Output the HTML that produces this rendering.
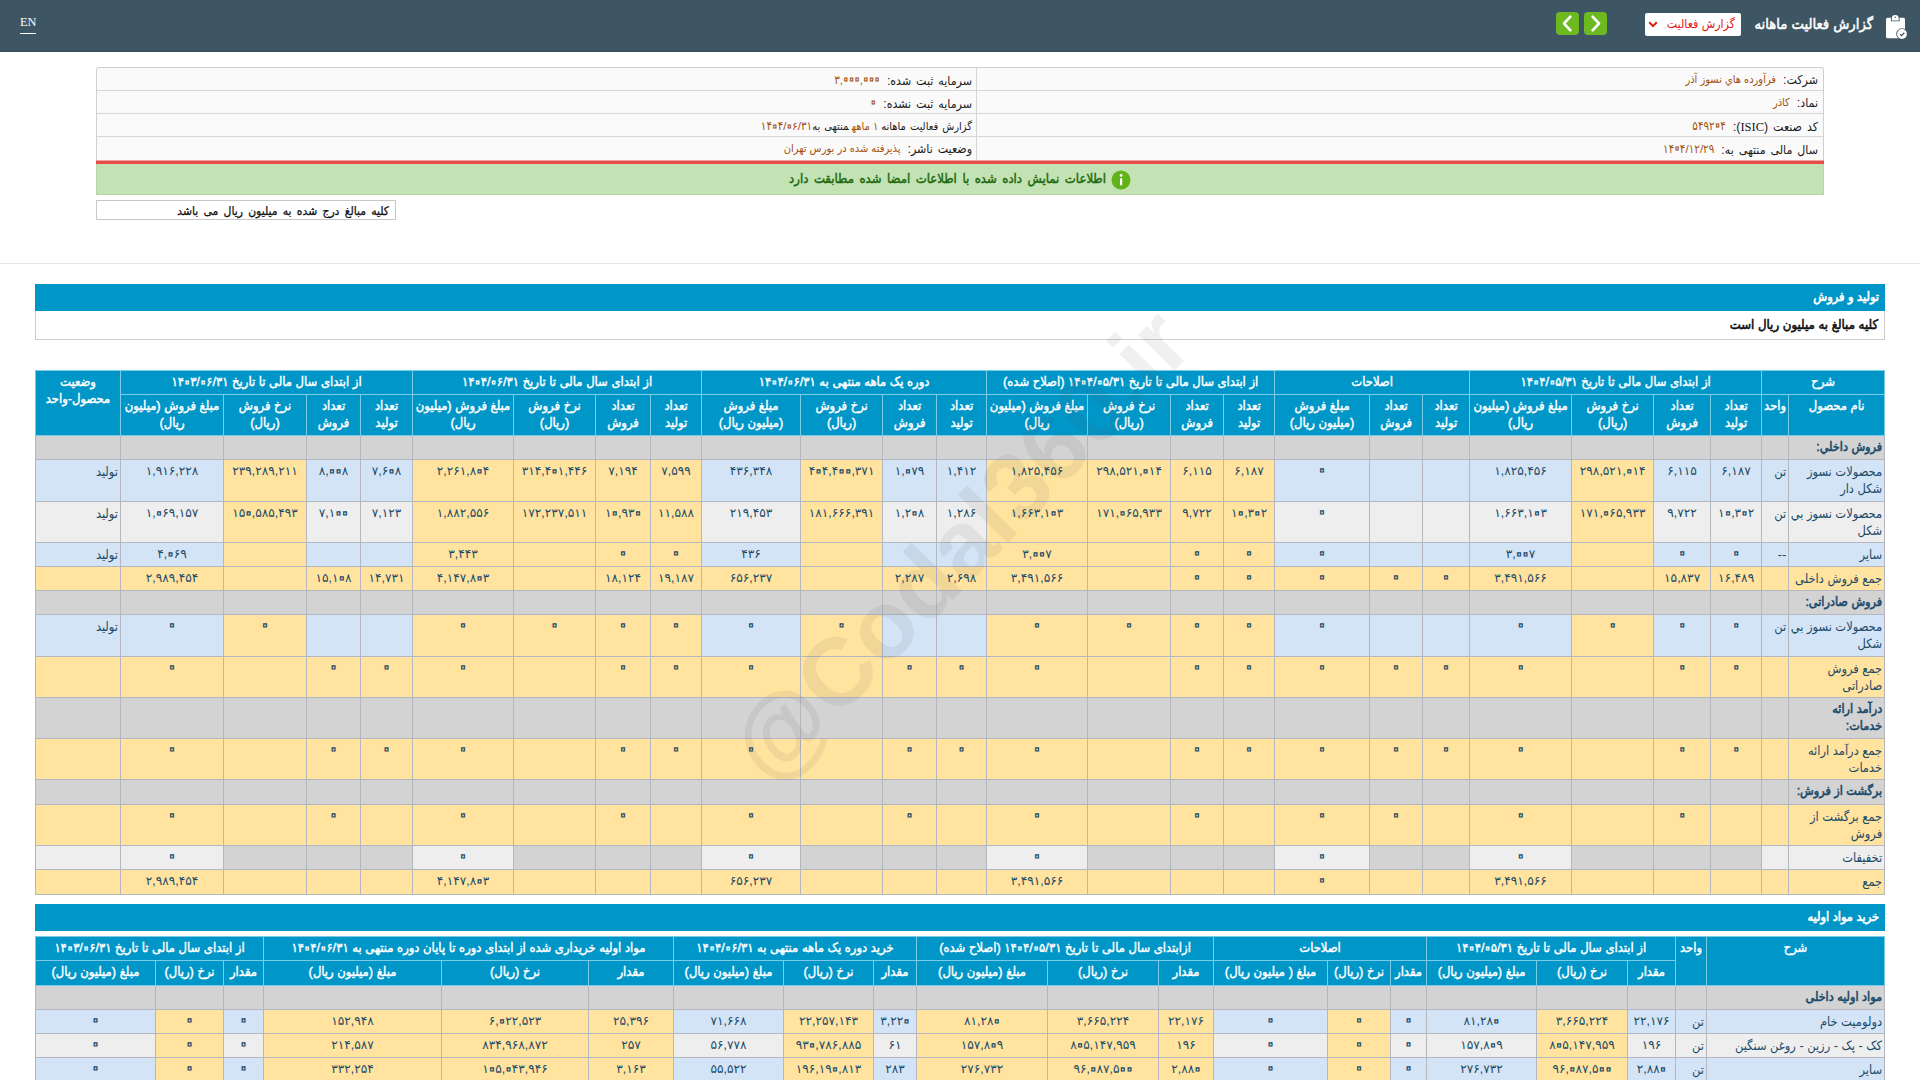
<!DOCTYPE html>
<html lang="fa" dir="rtl">
<head>
<meta charset="utf-8">
<title>گزارش فعالیت ماهانه</title>
<style>
*{box-sizing:border-box;margin:0;padding:0}
html,body{width:1920px;height:1080px;overflow:hidden;background:#fff}
body{font-family:"Liberation Sans","DejaVu Sans Condensed","DejaVu Sans",sans-serif;direction:rtl;position:relative;color:#000}
.abs{position:absolute}
#hdr{left:0;top:0;width:1920px;height:52px;background:#3e5663;border-bottom:1px solid #36505c}
#ttl{right:47px;top:13px;color:#fff;-webkit-text-stroke:0.5px #fff;font-size:14.7px;line-height:22px;white-space:nowrap}
#sel{left:1645px;top:13px;width:96px;height:23px;background:#fff;border-radius:2px;color:#e0201c;font-size:12.3px;line-height:22px;text-align:right;padding-right:6px;white-space:nowrap}
.gb{top:12px;width:23px;height:23px;background:#6cb920;border-radius:4px}
#en{left:20px;top:15px;color:#fff;font-family:"Liberation Serif",serif;font-size:12.3px;line-height:14px;direction:ltr;border-bottom:1px solid #fff;padding-bottom:4px}
#info{left:96px;top:67px;width:1728px;height:95px;border:1px solid #d0d0d0;border-bottom:none;background:#fafafa;border-radius:3px 3px 0 0}
.ir{position:absolute;left:0;right:0;height:23px;border-bottom:1px solid #d6d6d6}
.ir:nth-child(4){border-bottom:none}
.ic{position:absolute;top:0;height:23px;font-size:12.3px;line-height:25px;white-space:nowrap;color:#1a1a1a;word-spacing:1.5px}
.ic b{font-weight:normal;color:#a2500f;margin-right:7px;font-size:11px;word-spacing:0;position:relative;top:-1.5px}
.ic b.dg{font-size:11.6px}
.ic.sm{font-size:11px;word-spacing:1px;line-height:23px}
.ic.sm b{top:0}
.ic i{font-style:normal;font-family:"Liberation Serif",serif;font-size:12.5px}
#red{left:96px;top:161px;width:1728px;height:3px;background:#e84c4c;box-shadow:0 -1px 0 rgba(232,76,76,.5)}
#grn{left:96px;top:164px;width:1728px;height:31px;background:#c3e3b4;border:1px solid #b9d3ad;border-top:none;color:#1f6a10;-webkit-text-stroke:0.45px #1f6a10;font-size:13px;word-spacing:1.9px;line-height:30px;text-align:center;white-space:nowrap}
#note{left:96px;top:200px;width:300px;height:20px;border:1px solid #c8c8c8;background:#fff;font-size:12px;-webkit-text-stroke:0.25px #111;word-spacing:1.9px;line-height:20px;padding-right:6px;white-space:nowrap;color:#111}
#hr{left:0;top:263px;width:1920px;height:1px;background:#e6e6e6}
.bar{left:35px;width:1850px;height:27px;background:#0096c8;color:#fff;-webkit-text-stroke:0.6px #fff;font-size:12.7px;line-height:26px;padding-right:6px;white-space:nowrap}
#sub{left:35px;top:311px;width:1850px;height:29px;border:1px solid #cfcfcf;border-top:none;background:#fff;-webkit-text-stroke:0.55px #111;font-size:13.1px;line-height:28px;padding-right:6px;white-space:nowrap;color:#111}
table{position:absolute;left:35px;width:1850px;border-collapse:collapse;table-layout:fixed;direction:rtl}
td,th{border:1px solid #b4b6c0;font-size:12.75px;line-height:17px;text-align:center;vertical-align:top;padding:3px 1px 0 1px;color:#1b4a68;overflow:hidden;white-space:nowrap;font-weight:normal}
th{background:#0096c8;color:#fff;border-color:#7ccbe6;font-size:12.9px;-webkit-text-stroke:0.4px #fff;padding-top:2px}
td.n{text-align:right;padding-right:2px}
td.r{text-align:right;padding-right:2px}
.y{background:#ffe39e}.b{background:#d3e4f6}.g{background:#eeeeee}.d{background:#d3d3d3}
tr.h td{-webkit-text-stroke:0.55px #1b4a68;font-size:12.5px}
td.u{font-family:"Liberation Sans","DejaVu Sans",sans-serif;font-size:12.2px}
.zh{font-size:24px;line-height:14px;color:transparent;-webkit-text-stroke:1.2px #fff;vertical-align:-2.55px;margin:0 -2.68px}
.zb{font-size:24px;line-height:14px;color:transparent;-webkit-text-stroke:1px #a2500f;vertical-align:-2.95px;margin:0 -3px}
.zz{font-size:26px;line-height:14px;color:transparent;-webkit-text-stroke:1.2px #1b4a68;vertical-align:-3.6px;margin:0 -3.71px}
td.z{font-family:"Liberation Sans","DejaVu Sans",sans-serif;font-size:26px;color:transparent;-webkit-text-stroke:1.2px #1b4a68;padding-top:1px}
#wm{left:560px;top:480px;width:800px;height:130px;line-height:130px;text-align:center;font-size:96px;font-weight:bold;color:rgba(80,80,80,0.085);transform:rotate(-46deg);direction:ltr;white-space:nowrap;pointer-events:none;font-family:"Liberation Sans",sans-serif}
</style>
</head>
<body>
<div id="hdr" class="abs">
<svg class="abs" style="left:1880px;top:10px" width="32" height="32" viewBox="0 0 32 32"><rect x="6" y="7.7" width="19" height="20.6" rx="1.6" fill="#fff"/><path d="M10.9 11.3V8.6a4.35 4.35 0 0 1 8.7 0v2.7z" fill="#3e5663"/><path d="M11.8 10.4V8.5a3.45 3.45 0 0 1 6.9 0v1.9z" fill="#fff"/><circle cx="15.25" cy="7.3" r="0.7" fill="#3e5663"/><circle cx="22" cy="24" r="5.8" fill="#3e5663"/><circle cx="22" cy="24" r="4.9" fill="#fff"/><path d="M20.1 24.2l1.4 1.4 2.8-2.9" stroke="#3e5663" stroke-width="1.3" fill="none"/></svg>
<div id="ttl" class="abs">گزارش فعالیت ماهانه</div>
<div id="sel" class="abs">گزارش فعالیت<svg class="abs" style="left:3px;top:8px" width="10" height="7" viewBox="0 0 10 7"><path d="M1.2 1.2L5 5l3.8-3.800000000000001" stroke="#e0201c" stroke-width="2" fill="none"/></svg></div>
<div class="gb abs" style="left:1584px"><svg width="23" height="23" viewBox="0 0 23 23"><path d="M8.6 4.6l6.4 6.9-6.4 6.9" stroke="#fff" stroke-width="2.6" fill="none" stroke-linecap="round" stroke-linejoin="round"/></svg></div>
<div class="gb abs" style="left:1556px"><svg width="23" height="23" viewBox="0 0 23 23"><path d="M14.4 4.6l-6.4 6.9 6.4 6.9" stroke="#fff" stroke-width="2.6" fill="none" stroke-linecap="round" stroke-linejoin="round"/></svg></div>
<div id="en" class="abs">EN</div>
</div>
<div id="info" class="abs">
<div class="ir" style="top:0px"><div class="ic" style="right:5px">شرکت:<b>فرآورده هاي نسوز آذر</b></div><div class="ic" style="right:851px">سرمایه ثبت شده:<b class="dg">۳,<span class="zb">۰</span><span class="zb">۰</span><span class="zb">۰</span>,<span class="zb">۰</span><span class="zb">۰</span><span class="zb">۰</span></b></div></div>
<div class="ir" style="top:23px"><div class="ic" style="right:5px">نماد:<b>کاذر</b></div><div class="ic" style="right:851px">سرمایه ثبت نشده:<b class="dg"><span class="zb">۰</span></b></div></div>
<div class="ir" style="top:46px"><div class="ic" style="right:5px">کد صنعت (<i>ISIC</i>):<b class="dg">۵۴۹۲<span class="zb">۰</span>۴</b></div><div class="ic sm" style="right:851px">گزارش فعالیت ماهانه<b style="margin:0 3px">۱ ماهه</b>منتهی به<b class="dg" style="margin:0">۱۴<span class="zb">۰</span>۴/<span class="zb">۰</span>۶/۳۱</b></div></div>
<div class="ir" style="top:69px"><div class="ic" style="right:5px">سال مالی منتهی به:<b class="dg">۱۴<span class="zb">۰</span>۴/۱۲/۲۹</b></div><div class="ic" style="right:851px">وضعیت ناشر:<b>پذیرفته شده در بورس تهران</b></div></div>
<div class="abs" style="left:879px;top:0;width:1px;height:93px;background:#d6d6d6"></div>
</div>
<div id="red" class="abs"></div>
<div id="grn" class="abs"><svg style="vertical-align:middle;margin-left:5px" width="20" height="20" viewBox="0 0 20 20"><circle cx="10" cy="10" r="9.5" fill="#62b31a"/><rect x="9" y="8.3" width="2.2" height="7" fill="#fff"/><circle cx="10.1" cy="5.4" r="1.4" fill="#fff"/></svg>اطلاعات نمایش داده شده با اطلاعات امضا شده مطابقت دارد</div>
<div id="note" class="abs">کلیه مبالغ درج شده به میلیون ریال می باشد</div>
<div id="hr" class="abs"></div>
<div class="bar abs" style="top:284px">تولید و فروش</div>
<div id="sub" class="abs">کلیه مبالغ به میلیون ریال است</div>
<table style="top:370px;width:1849px">
<colgroup><col style="width:96px"><col style="width:27px"><col style="width:51px"><col style="width:57px"><col style="width:82px"><col style="width:102px"><col style="width:47px"><col style="width:53px"><col style="width:95px"><col style="width:51px"><col style="width:53px"><col style="width:83px"><col style="width:101px"><col style="width:50px"><col style="width:54px"><col style="width:82px"><col style="width:99px"><col style="width:51px"><col style="width:55px"><col style="width:82px"><col style="width:101px"><col style="width:52px"><col style="width:54px"><col style="width:83px"><col style="width:103px"><col style="width:85px"></colgroup>
<tr style="height:24px"><th colspan="2">شرح</th><th colspan="4">از ابتدای سال مالی تا تاریخ ۱۴<span class="zh">۰</span>۴/<span class="zh">۰</span>۵/۳۱</th><th colspan="3">اصلاحات</th><th colspan="4">از ابتدای سال مالی تا تاریخ ۱۴<span class="zh">۰</span>۴/<span class="zh">۰</span>۵/۳۱ (اصلاح شده)</th><th colspan="4">دوره یک ماهه منتهی به ۱۴<span class="zh">۰</span>۴/<span class="zh">۰</span>۶/۳۱</th><th colspan="4">از ابتدای سال مالی تا تاریخ ۱۴<span class="zh">۰</span>۴/<span class="zh">۰</span>۶/۳۱</th><th colspan="4">از ابتدای سال مالی تا تاریخ ۱۴<span class="zh">۰</span>۳/<span class="zh">۰</span>۶/۳۱</th><th rowspan="2">وضعیت<br>محصول-واحد</th></tr>
<tr style="height:41px"><th>نام محصول</th><th>واحد</th><th>تعداد<br>تولید</th><th>تعداد<br>فروش</th><th>نرخ فروش<br>(ریال)</th><th>مبلغ فروش (میلیون<br>ریال)</th><th>تعداد<br>تولید</th><th>تعداد<br>فروش</th><th>مبلغ فروش<br>(میلیون ریال)</th><th>تعداد<br>تولید</th><th>تعداد<br>فروش</th><th>نرخ فروش<br>(ریال)</th><th>مبلغ فروش (میلیون<br>ریال)</th><th>تعداد<br>تولید</th><th>تعداد<br>فروش</th><th>نرخ فروش<br>(ریال)</th><th>مبلغ فروش<br>(میلیون ریال)</th><th>تعداد<br>تولید</th><th>تعداد<br>فروش</th><th>نرخ فروش<br>(ریال)</th><th>مبلغ فروش (میلیون<br>ریال)</th><th>تعداد<br>تولید</th><th>تعداد<br>فروش</th><th>نرخ فروش<br>(ریال)</th><th>مبلغ فروش (میلیون<br>ریال)</th></tr>
<tr style="height:24px" class="h"><td class="d n">فروش داخلي:</td><td class="d r"></td><td class="d"></td><td class="d"></td><td class="d"></td><td class="d"></td><td class="d"></td><td class="d"></td><td class="d"></td><td class="d"></td><td class="d"></td><td class="d"></td><td class="d"></td><td class="d"></td><td class="d"></td><td class="d"></td><td class="d"></td><td class="d"></td><td class="d"></td><td class="d"></td><td class="d"></td><td class="d"></td><td class="d"></td><td class="d"></td><td class="d"></td><td class="d r"></td></tr>
<tr style="height:42px"><td class="b n">محصولات نسوز<br>شکل دار</td><td class="b r">تن</td><td class="b u">۶,۱۸۷</td><td class="b u">۶,۱۱۵</td><td class="y u">۲۹۸,۵۲۱,<span class="zz">۰</span>۱۴</td><td class="b u">۱,۸۲۵,۴۵۶</td><td class="b"></td><td class="b"></td><td class="b z">۰</td><td class="y u">۶,۱۸۷</td><td class="y u">۶,۱۱۵</td><td class="y u">۲۹۸,۵۲۱,<span class="zz">۰</span>۱۴</td><td class="y u">۱,۸۲۵,۴۵۶</td><td class="b u">۱,۴۱۲</td><td class="b u">۱,<span class="zz">۰</span>۷۹</td><td class="y u">۴<span class="zz">۰</span>۴,۴<span class="zz">۰</span><span class="zz">۰</span>,۳۷۱</td><td class="b u">۴۳۶,۳۴۸</td><td class="y u">۷,۵۹۹</td><td class="y u">۷,۱۹۴</td><td class="y u">۳۱۴,۴<span class="zz">۰</span>۱,۴۴۶</td><td class="y u">۲,۲۶۱,۸<span class="zz">۰</span>۴</td><td class="b u">۷,۶<span class="zz">۰</span>۸</td><td class="b u">۸,<span class="zz">۰</span><span class="zz">۰</span>۸</td><td class="y u">۲۳۹,۲۸۹,۲۱۱</td><td class="b u">۱,۹۱۶,۲۲۸</td><td class="b r">تولید</td></tr>
<tr style="height:41px"><td class="g n">محصولات نسوز بي<br>شکل</td><td class="g r">تن</td><td class="g u">۱<span class="zz">۰</span>,۳<span class="zz">۰</span>۲</td><td class="g u">۹,۷۲۲</td><td class="y u">۱۷۱,<span class="zz">۰</span>۶۵,۹۳۳</td><td class="g u">۱,۶۶۳,۱<span class="zz">۰</span>۳</td><td class="g"></td><td class="g"></td><td class="g z">۰</td><td class="y u">۱<span class="zz">۰</span>,۳<span class="zz">۰</span>۲</td><td class="y u">۹,۷۲۲</td><td class="y u">۱۷۱,<span class="zz">۰</span>۶۵,۹۳۳</td><td class="y u">۱,۶۶۳,۱<span class="zz">۰</span>۳</td><td class="g u">۱,۲۸۶</td><td class="g u">۱,۲<span class="zz">۰</span>۸</td><td class="y u">۱۸۱,۶۶۶,۳۹۱</td><td class="g u">۲۱۹,۴۵۳</td><td class="y u">۱۱,۵۸۸</td><td class="y u">۱<span class="zz">۰</span>,۹۳<span class="zz">۰</span></td><td class="y u">۱۷۲,۲۳۷,۵۱۱</td><td class="y u">۱,۸۸۲,۵۵۶</td><td class="g u">۷,۱۲۳</td><td class="g u">۷,۱<span class="zz">۰</span><span class="zz">۰</span></td><td class="y u">۱۵<span class="zz">۰</span>,۵۸۵,۴۹۳</td><td class="g u">۱,<span class="zz">۰</span>۶۹,۱۵۷</td><td class="g r">تولید</td></tr>
<tr style="height:24px"><td class="b n">سایر</td><td class="b r">--</td><td class="b z">۰</td><td class="b z">۰</td><td class="y"></td><td class="b u">۳,<span class="zz">۰</span><span class="zz">۰</span>۷</td><td class="b"></td><td class="b"></td><td class="b z">۰</td><td class="y z">۰</td><td class="y z">۰</td><td class="y"></td><td class="y u">۳,<span class="zz">۰</span><span class="zz">۰</span>۷</td><td class="b"></td><td class="b"></td><td class="y"></td><td class="b u">۴۳۶</td><td class="y z">۰</td><td class="y z">۰</td><td class="y"></td><td class="y u">۳,۴۴۳</td><td class="b"></td><td class="b"></td><td class="y"></td><td class="b u">۴,<span class="zz">۰</span>۶۹</td><td class="b r">تولید</td></tr>
<tr style="height:24px"><td class="y n">جمع فروش داخلی</td><td class="y r"></td><td class="y u">۱۶,۴۸۹</td><td class="y u">۱۵,۸۳۷</td><td class="y"></td><td class="y u">۳,۴۹۱,۵۶۶</td><td class="y z">۰</td><td class="y z">۰</td><td class="y z">۰</td><td class="y z">۰</td><td class="y z">۰</td><td class="y"></td><td class="y u">۳,۴۹۱,۵۶۶</td><td class="y u">۲,۶۹۸</td><td class="y u">۲,۲۸۷</td><td class="y"></td><td class="y u">۶۵۶,۲۳۷</td><td class="y u">۱۹,۱۸۷</td><td class="y u">۱۸,۱۲۴</td><td class="y"></td><td class="y u">۴,۱۴۷,۸<span class="zz">۰</span>۳</td><td class="y u">۱۴,۷۳۱</td><td class="y u">۱۵,۱<span class="zz">۰</span>۸</td><td class="y"></td><td class="y u">۲,۹۸۹,۴۵۴</td><td class="y r"></td></tr>
<tr style="height:24px" class="h"><td class="d n">فروش صادراتی:</td><td class="d r"></td><td class="d"></td><td class="d"></td><td class="d"></td><td class="d"></td><td class="d"></td><td class="d"></td><td class="d"></td><td class="d"></td><td class="d"></td><td class="d"></td><td class="d"></td><td class="d"></td><td class="d"></td><td class="d"></td><td class="d"></td><td class="d"></td><td class="d"></td><td class="d"></td><td class="d"></td><td class="d"></td><td class="d"></td><td class="d"></td><td class="d"></td><td class="d r"></td></tr>
<tr style="height:42px"><td class="b n">محصولات نسوز بي<br>شکل</td><td class="b r">تن</td><td class="b z">۰</td><td class="b z">۰</td><td class="y z">۰</td><td class="b z">۰</td><td class="b"></td><td class="b"></td><td class="b z">۰</td><td class="y z">۰</td><td class="y z">۰</td><td class="y z">۰</td><td class="y z">۰</td><td class="b"></td><td class="b"></td><td class="y z">۰</td><td class="b z">۰</td><td class="y z">۰</td><td class="y z">۰</td><td class="y z">۰</td><td class="y z">۰</td><td class="b"></td><td class="b"></td><td class="y z">۰</td><td class="b z">۰</td><td class="b r">تولید</td></tr>
<tr style="height:41px"><td class="y n">جمع فروش<br>صادراتی</td><td class="y r"></td><td class="y z">۰</td><td class="y z">۰</td><td class="y"></td><td class="y z">۰</td><td class="y z">۰</td><td class="y z">۰</td><td class="y z">۰</td><td class="y z">۰</td><td class="y z">۰</td><td class="y"></td><td class="y z">۰</td><td class="y z">۰</td><td class="y z">۰</td><td class="y"></td><td class="y z">۰</td><td class="y z">۰</td><td class="y z">۰</td><td class="y"></td><td class="y z">۰</td><td class="y z">۰</td><td class="y z">۰</td><td class="y"></td><td class="y z">۰</td><td class="y r"></td></tr>
<tr style="height:41px" class="h"><td class="d n">درآمد ارائه<br>خدمات:</td><td class="d r"></td><td class="d"></td><td class="d"></td><td class="d"></td><td class="d"></td><td class="d"></td><td class="d"></td><td class="d"></td><td class="d"></td><td class="d"></td><td class="d"></td><td class="d"></td><td class="d"></td><td class="d"></td><td class="d"></td><td class="d"></td><td class="d"></td><td class="d"></td><td class="d"></td><td class="d"></td><td class="d"></td><td class="d"></td><td class="d"></td><td class="d"></td><td class="d r"></td></tr>
<tr style="height:41px"><td class="y n">جمع درآمد ارائه<br>خدمات</td><td class="y r"></td><td class="y z">۰</td><td class="y z">۰</td><td class="y"></td><td class="y z">۰</td><td class="y z">۰</td><td class="y z">۰</td><td class="y z">۰</td><td class="y z">۰</td><td class="y z">۰</td><td class="y"></td><td class="y z">۰</td><td class="y z">۰</td><td class="y z">۰</td><td class="y"></td><td class="y z">۰</td><td class="y z">۰</td><td class="y z">۰</td><td class="y"></td><td class="y z">۰</td><td class="y z">۰</td><td class="y z">۰</td><td class="y"></td><td class="y z">۰</td><td class="y r"></td></tr>
<tr style="height:25px" class="h"><td class="d n">برگشت از فروش:</td><td class="d r"></td><td class="d"></td><td class="d"></td><td class="d"></td><td class="d"></td><td class="d"></td><td class="d"></td><td class="d"></td><td class="d"></td><td class="d"></td><td class="d"></td><td class="d"></td><td class="d"></td><td class="d"></td><td class="d"></td><td class="d"></td><td class="d"></td><td class="d"></td><td class="d"></td><td class="d"></td><td class="d"></td><td class="d"></td><td class="d"></td><td class="d"></td><td class="d r"></td></tr>
<tr style="height:41px"><td class="y n">جمع برگشت از<br>فروش</td><td class="y r"></td><td class="y"></td><td class="y z">۰</td><td class="y"></td><td class="y z">۰</td><td class="y"></td><td class="y z">۰</td><td class="y z">۰</td><td class="y"></td><td class="y z">۰</td><td class="y"></td><td class="y z">۰</td><td class="y"></td><td class="y z">۰</td><td class="y"></td><td class="y z">۰</td><td class="y"></td><td class="y z">۰</td><td class="y"></td><td class="y z">۰</td><td class="y"></td><td class="y z">۰</td><td class="y"></td><td class="y z">۰</td><td class="y r"></td></tr>
<tr style="height:24px"><td class="g n">تخفیفات</td><td class="g r"></td><td class="d"></td><td class="d"></td><td class="d"></td><td class="g z">۰</td><td class="d"></td><td class="d"></td><td class="g z">۰</td><td class="d"></td><td class="d"></td><td class="d"></td><td class="g z">۰</td><td class="d"></td><td class="d"></td><td class="d"></td><td class="g z">۰</td><td class="d"></td><td class="d"></td><td class="d"></td><td class="g z">۰</td><td class="d"></td><td class="d"></td><td class="d"></td><td class="g z">۰</td><td class="g r"></td></tr>
<tr style="height:25px"><td class="y n">جمع</td><td class="y r"></td><td class="y"></td><td class="y"></td><td class="y"></td><td class="y u">۳,۴۹۱,۵۶۶</td><td class="y"></td><td class="y"></td><td class="y z">۰</td><td class="y"></td><td class="y"></td><td class="y"></td><td class="y u">۳,۴۹۱,۵۶۶</td><td class="y"></td><td class="y"></td><td class="y"></td><td class="y u">۶۵۶,۲۳۷</td><td class="y"></td><td class="y"></td><td class="y"></td><td class="y u">۴,۱۴۷,۸<span class="zz">۰</span>۳</td><td class="y"></td><td class="y"></td><td class="y"></td><td class="y u">۲,۹۸۹,۴۵۴</td><td class="y r"></td></tr>
</table>
<div class="bar abs" style="top:904px">خرید مواد اولیه</div>
<table style="top:936px;width:1849px">
<colgroup><col style="width:178px"><col style="width:31px"><col style="width:48px"><col style="width:91px"><col style="width:110px"><col style="width:36px"><col style="width:63px"><col style="width:114px"><col style="width:55px"><col style="width:111px"><col style="width:131px"><col style="width:43px"><col style="width:90px"><col style="width:110px"><col style="width:85px"><col style="width:147px"><col style="width:178px"><col style="width:40px"><col style="width:68px"><col style="width:120px"></colgroup>
<tr style="height:24px"><th rowspan="2">شرح</th><th rowspan="2">واحد</th><th colspan="3">از ابتدای سال مالی تا تاریخ ۱۴<span class="zh">۰</span>۴/<span class="zh">۰</span>۵/۳۱</th><th colspan="3">اصلاحات</th><th colspan="3">ازابتدای سال مالی تا تاریخ ۱۴<span class="zh">۰</span>۴/<span class="zh">۰</span>۵/۳۱ (اصلاح شده)</th><th colspan="3">خرید دوره یک ماهه منتهی به ۱۴<span class="zh">۰</span>۴/<span class="zh">۰</span>۶/۳۱</th><th colspan="3">مواد اولیه خریداری شده از ابتدای دوره تا پایان دوره منتهی به ۱۴<span class="zh">۰</span>۴/<span class="zh">۰</span>۶/۳۱</th><th colspan="3">از ابتدای سال مالی تا تاریخ ۱۴<span class="zh">۰</span>۳/<span class="zh">۰</span>۶/۳۱</th></tr>
<tr style="height:25px"><th>مقدار</th><th>نرخ (ریال)</th><th>مبلغ (میلیون ریال)</th><th>مقدار</th><th>نرخ (ریال)</th><th>مبلغ ( میلیون ریال)</th><th>مقدار</th><th>نرخ (ریال)</th><th>مبلغ (میلیون ریال)</th><th>مقدار</th><th>نرخ (ریال)</th><th>مبلغ (میلیون ریال)</th><th>مقدار</th><th>نرخ (ریال)</th><th>مبلغ (میلیون ریال)</th><th>مقدار</th><th>نرخ (ریال)</th><th>مبلغ (میلیون ریال)</th></tr>
<tr style="height:24px" class="h"><td class="d n">مواد اولیه داخلی</td><td class="d r"></td><td class="d"></td><td class="d"></td><td class="d"></td><td class="d"></td><td class="d"></td><td class="d"></td><td class="d"></td><td class="d"></td><td class="d"></td><td class="d"></td><td class="d"></td><td class="d"></td><td class="d"></td><td class="d"></td><td class="d"></td><td class="d"></td><td class="d"></td><td class="d"></td></tr>
<tr style="height:24px"><td class="b n">دولومیت خام</td><td class="b r">تن</td><td class="b u">۲۲,۱۷۶</td><td class="y u">۳,۶۶۵,۲۲۴</td><td class="b u">۸۱,۲۸<span class="zz">۰</span></td><td class="b z">۰</td><td class="y z">۰</td><td class="b z">۰</td><td class="y u">۲۲,۱۷۶</td><td class="y u">۳,۶۶۵,۲۲۴</td><td class="y u">۸۱,۲۸<span class="zz">۰</span></td><td class="b u">۳,۲۲<span class="zz">۰</span></td><td class="y u">۲۲,۲۵۷,۱۴۳</td><td class="b u">۷۱,۶۶۸</td><td class="y u">۲۵,۳۹۶</td><td class="y u">۶,<span class="zz">۰</span>۲۲,۵۲۳</td><td class="y u">۱۵۲,۹۴۸</td><td class="b z">۰</td><td class="y z">۰</td><td class="b z">۰</td></tr>
<tr style="height:24px"><td class="g n">کک - پک - رزین - روغن سنگین</td><td class="g r">تن</td><td class="g u">۱۹۶</td><td class="y u">۸<span class="zz">۰</span>۵,۱۴۷,۹۵۹</td><td class="g u">۱۵۷,۸<span class="zz">۰</span>۹</td><td class="g z">۰</td><td class="y z">۰</td><td class="g z">۰</td><td class="y u">۱۹۶</td><td class="y u">۸<span class="zz">۰</span>۵,۱۴۷,۹۵۹</td><td class="y u">۱۵۷,۸<span class="zz">۰</span>۹</td><td class="g u">۶۱</td><td class="y u">۹۳<span class="zz">۰</span>,۷۸۶,۸۸۵</td><td class="g u">۵۶,۷۷۸</td><td class="y u">۲۵۷</td><td class="y u">۸۳۴,۹۶۸,۸۷۲</td><td class="y u">۲۱۴,۵۸۷</td><td class="g z">۰</td><td class="y z">۰</td><td class="g z">۰</td></tr>
<tr style="height:24px"><td class="b n">سایر</td><td class="b r">تن</td><td class="b u">۲,۸۸<span class="zz">۰</span></td><td class="y u">۹۶,<span class="zz">۰</span>۸۷,۵<span class="zz">۰</span><span class="zz">۰</span></td><td class="b u">۲۷۶,۷۳۲</td><td class="b z">۰</td><td class="y z">۰</td><td class="b z">۰</td><td class="y u">۲,۸۸<span class="zz">۰</span></td><td class="y u">۹۶,<span class="zz">۰</span>۸۷,۵<span class="zz">۰</span><span class="zz">۰</span></td><td class="y u">۲۷۶,۷۳۲</td><td class="b u">۲۸۳</td><td class="y u">۱۹۶,۱۹<span class="zz">۰</span>,۸۱۳</td><td class="b u">۵۵,۵۲۲</td><td class="y u">۳,۱۶۳</td><td class="y u">۱<span class="zz">۰</span>۵,<span class="zz">۰</span>۴۳,۹۴۶</td><td class="y u">۳۳۲,۲۵۴</td><td class="b z">۰</td><td class="y z">۰</td><td class="b z">۰</td></tr>
</table>
<div id="wm" class="abs">@Codal360.ir</div>
</body>
</html>
